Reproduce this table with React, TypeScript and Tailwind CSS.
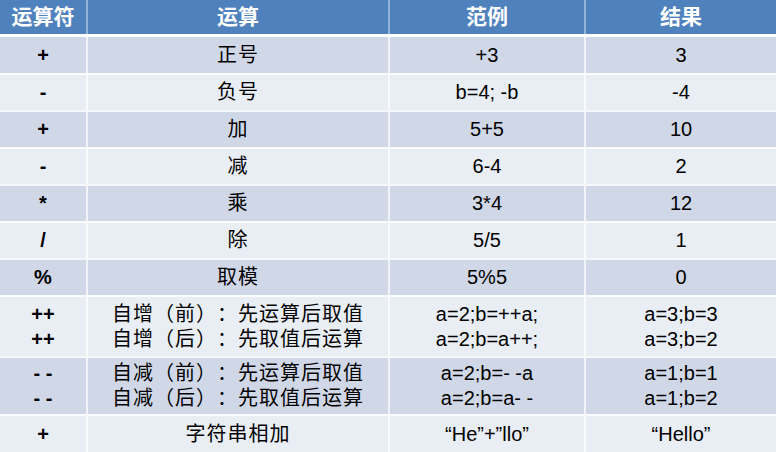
import React from "react";

type Row = { op: string[]; name: string[]; ex: string[]; res: string[]; h: string; dark: boolean };

const rows: Row[] = [
  { op: ["+"], name: ["正号"], ex: ["+3"], res: ["3"], h: "h-[36px]", dark: true },
  { op: ["-"], name: ["负号"], ex: ["b=4; -b"], res: ["-4"], h: "h-[37px]", dark: false },
  { op: ["+"], name: ["加"], ex: ["5+5"], res: ["10"], h: "h-[37px]", dark: true },
  { op: ["-"], name: ["减"], ex: ["6-4"], res: ["2"], h: "h-[37px]", dark: false },
  { op: ["*"], name: ["乘"], ex: ["3*4"], res: ["12"], h: "h-[37px]", dark: true },
  { op: ["/"], name: ["除"], ex: ["5/5"], res: ["1"], h: "h-[37px]", dark: false },
  { op: ["%"], name: ["取模"], ex: ["5%5"], res: ["0"], h: "h-[37px]", dark: true },
  {
    op: ["++", "++"],
    name: ["自增（前）：先运算后取值", "自增（后）：先取值后运算"],
    ex: ["a=2;b=++a;", "a=2;b=a++;"],
    res: ["a=3;b=3", "a=3;b=2"],
    h: "h-[61px]",
    dark: false,
  },
  {
    op: ["- -", "- -"],
    name: ["自减（前）：先运算后取值", "自减（后）：先取值后运算"],
    ex: ["a=2;b=- -a", "a=2;b=a- -"],
    res: ["a=1;b=1", "a=1;b=2"],
    h: "h-[58px]",
    dark: true,
  },
  { op: ["+"], name: ["字符串相加"], ex: ["“He”+”llo”"], res: ["“Hello”"], h: "h-[38px]", dark: false },
];

function Cell({ lines, first, bold, wide }: { lines: string[]; first?: boolean; bold?: boolean; wide?: boolean }) {
  return (
    <div
      className={
        "flex flex-col items-center justify-center leading-[25px] " +
        (first ? "" : "border-l-2 border-white/70 ") +
        (bold ? "font-bold " : "") +
        (wide ? "tracking-[1px]" : "")
      }
    >
      {lines.map((l, i) => (
        <div key={i} className="whitespace-pre">
          {l}
        </div>
      ))}
    </div>
  );
}

export default function App() {
  return (
    <div
      className="w-[776px] h-[452px] overflow-hidden bg-white text-black text-[20px] [text-spacing-trim:space-all]"
      style={{ fontFamily: '"Liberation Sans", "Noto Sans CJK SC", sans-serif' }}
    >
      <div className="grid grid-cols-[86px_302px_196px_192px] h-[37px] bg-[#4f81bd] border-b-[3px] border-white text-white font-bold text-[21px]">
        <div className="flex items-center justify-center">运算符</div>
        <div className="flex items-center justify-center border-l-2 border-white/40">运算</div>
        <div className="flex items-center justify-center border-l-2 border-white/40">范例</div>
        <div className="flex items-center justify-center border-l-2 border-white/40">结果</div>
      </div>
      {rows.map((r, i) => (
        <div
          key={i}
          className={
            "grid grid-cols-[86px_302px_196px_192px] " +
            r.h +
            " " +
            (i === 0 ? "" : "border-t-2 border-white/80 ") +
            (r.dark ? "bg-[#d0d8e8]" : "bg-[#e9edf4]")
          }
        >
          <Cell lines={r.op} first bold />
          <Cell lines={r.name} wide />
          <Cell lines={r.ex} />
          <Cell lines={r.res} />
        </div>
      ))}
    </div>
  );
}
